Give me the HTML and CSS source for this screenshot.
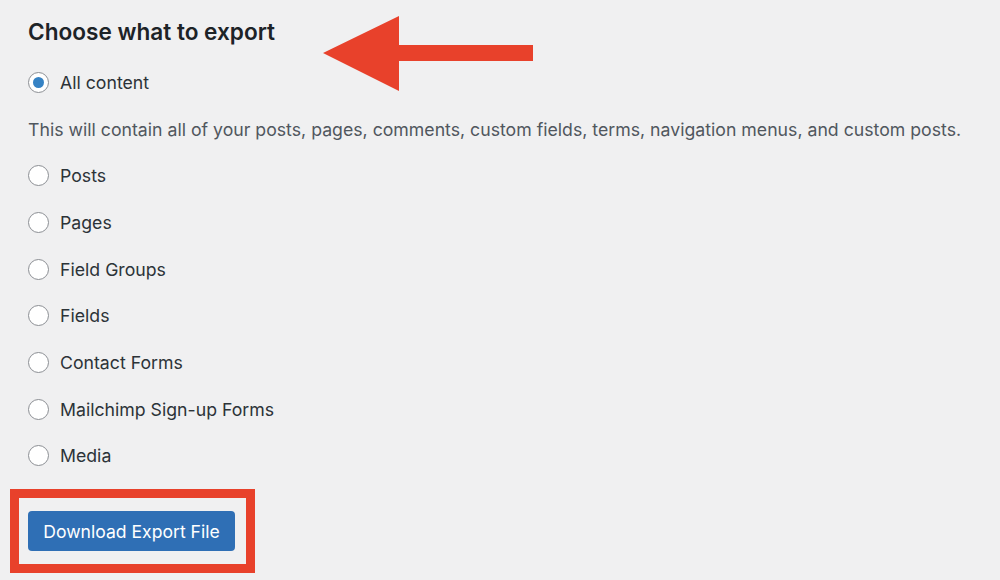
FILE: index.html
```html
<!DOCTYPE html>
<html lang="en">
<head>
    <meta charset="UTF-8">
    <title>Export</title>
    <link rel="stylesheet" href="styles.css">
</head>
<body>

    <div class="export">
        <h2>Choose what to export</h2>

        <svg class="arrow" width="212" height="76" viewBox="0 0 212 76">
            <polygon points="0,37 76,0 76,29 210,29 210,45 76,45 76,75" fill="#e8412b"/>
        </svg>

        <label class="option"><input type="radio" name="content" checked> All content</label>
        <p class="description">This will contain all of your posts, pages, comments, custom fields, terms, navigation menus, and custom posts.</p>
        <label class="option"><input type="radio" name="content"> Posts</label>
        <label class="option"><input type="radio" name="content"> Pages</label>
        <label class="option"><input type="radio" name="content"> Field Groups</label>
        <label class="option"><input type="radio" name="content"> Fields</label>
        <label class="option"><input type="radio" name="content"> Contact Forms</label>
        <label class="option"><input type="radio" name="content"> Mailchimp Sign-up Forms</label>
        <label class="option"><input type="radio" name="content"> Media</label>

        <div class="highlight">
            <button class="button">Download Export File</button>
        </div>
    </div>

</body>
</html>
```

FILE: styles.css
```css
body {
    font-family: Inter, "Liberation Sans", sans-serif;
    margin: 0;
    padding: 0;
    background-color: #f0f0f1;
    color: #1d2327;
}

.export {
    position: relative;
    padding: 18px 28px 0;
}

h2 {
    font-size: 22.6px;
    font-weight: 600;
    line-height: 28px;
    margin: 0 0 13px;
}

.arrow {
    position: absolute;
    top: 16px;
    left: 323px;
}

.option,
.description {
    display: flex;
    align-items: center;
    height: 46.7px;
    margin: 0;
    font-size: 17.7px;
}

.option {
    gap: 11px;
    color: #2c3338;
}

.description {
    color: #50575e;
}

input[type="radio"] {
    appearance: none;
    margin: 0;
    width: 21px;
    height: 21px;
    border: 1px solid #8c8f94;
    border-radius: 50%;
    background-color: #fff;
    display: inline-flex;
    align-items: center;
    justify-content: center;
    box-sizing: border-box;
}

input[type="radio"]:checked::before {
    content: "";
    width: 11px;
    height: 11px;
    border-radius: 50%;
    background-color: #3582c4;
}

.highlight {
    display: inline-block;
    margin: 10px 0 0 -18px;
    padding: 13px 11px 13px 9px;
    border: 9px solid #e8412b;
}

.button {
    display: block;
    width: 207px;
    height: 40px;
    padding: 0;
    font-family: inherit;
    font-size: 17.6px;
    color: #fff;
    background-color: #2f6fb5;
    border: none;
    border-radius: 4px;
    cursor: pointer;
}
```
